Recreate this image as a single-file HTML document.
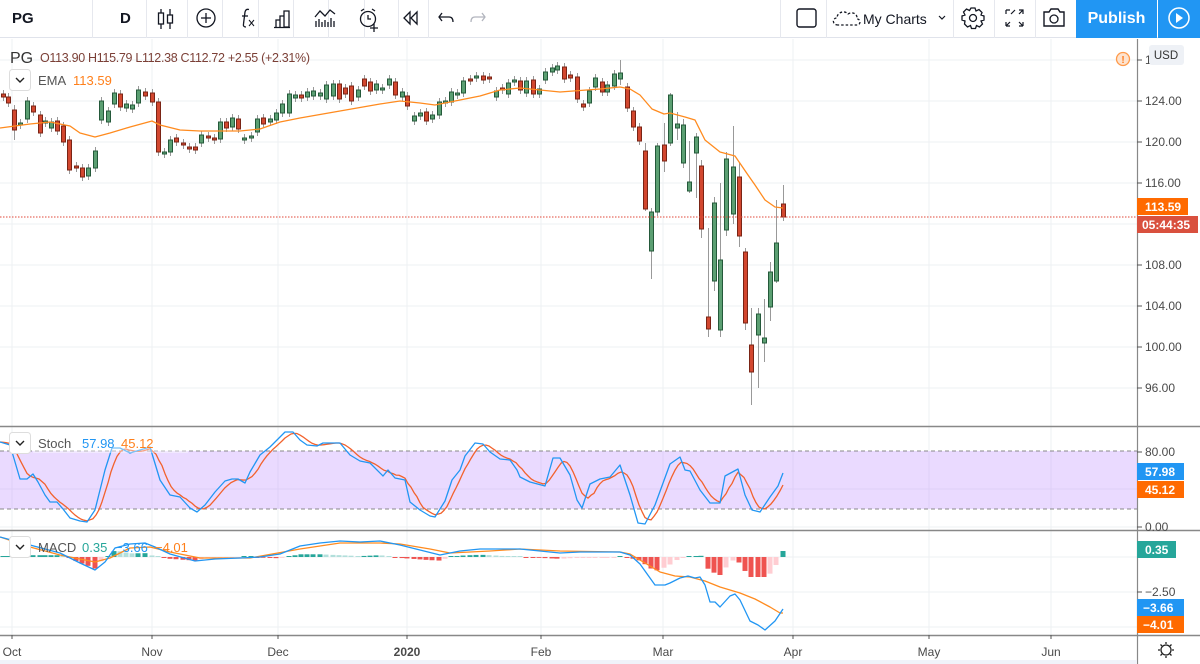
<!DOCTYPE html>
<html><head><meta charset="utf-8">
<style>
*{margin:0;padding:0;box-sizing:border-box}
body{width:1200px;height:664px;overflow:hidden;background:#fff;font-family:"Liberation Sans",sans-serif;color:#131722;position:relative}
#tb{position:absolute;left:0;top:0;width:1200px;height:38px;border-bottom:1px solid #e0e3eb;background:#fff;z-index:2}
.sep{position:absolute;top:0;width:1px;height:38px;background:#e6e8ee}
.tx{position:absolute;font-size:15px;top:10px}
#chart{position:absolute;left:0;top:0}
</style></head><body>
<div id="tb">
 <div class="tx" style="left:12px;font-weight:bold;font-size:15px">PG</div>
 <div class="sep" style="left:92px"></div>
 <div class="tx" style="left:120px;font-weight:bold">D</div>
 <div class="sep" style="left:146px"></div><div class="sep" style="left:187px"></div><div class="sep" style="left:222px"></div><div class="sep" style="left:258px"></div><div class="sep" style="left:293px"></div><div class="sep" style="left:328px"></div><div class="sep" style="left:364px"></div><div class="sep" style="left:398px"></div><div class="sep" style="left:428px"></div>
 <div class="sep" style="left:780px"></div><div class="sep" style="left:826px"></div><div class="sep" style="left:953px"></div><div class="sep" style="left:994px"></div><div class="sep" style="left:1035px"></div>
 <svg width="1200" height="38" style="position:absolute;left:0;top:0" fill="none" stroke="#131722" stroke-width="1.3">
  <g><line x1="161" y1="9" x2="161" y2="29"/><rect x="158.5" y="13" width="5" height="11" fill="#fff"/><line x1="170" y1="9" x2="170" y2="29"/><rect x="167.5" y="15" width="5" height="8" fill="#fff"/></g>
  <circle cx="206" cy="18" r="9"/><line x1="206" y1="13" x2="206" y2="23"/><line x1="201" y1="18" x2="211" y2="18"/>
  <path d="M246 27 C244 27 243 26 243.5 24 L245 12 C245.5 9.5 247 9 249 9.5"/><line x1="242" y1="16" x2="248" y2="16"/><path d="M249 20 L254 26 M254 20 L249 26" stroke-width="1"/>
  <path d="M276 27V20H280V27 M280 27V16H284V27 M284 27V11H289V27Z M274 27.5H290"/>
  <path d="M315 17 L320 11 L325 16 L330 10 L335 14"/><path d="M316 27V21 M319 27V19 M322 27V22 M325 27V20 M328 27V22 M331 27V18 M334 27V21"/>
  <circle cx="368" cy="19" r="7.5"/><path d="M368 15V19H371 M361 11L364 9 M375 11L372 9 M374 24V32 M370 28H378"/>
  <path d="M410 12L404 18L410 24Z M417 12L411 18L417 24Z"/>
  <path d="M442 13L439 17L442 21 M439 17H449C452 17 453 19 453 22" stroke="#131722"/>
  <path d="M482 13L485 17L482 21 M485 17H475C472 17 471 19 471 22" stroke="#b2b5be"/>
  <rect x="797" y="9" width="19" height="18" rx="2.5" stroke-width="1.4"/>
  <path d="M838 25 C832 25 832 18 837 18 C837 12 845 10 848 14 C852 11 858 14 857 19 C861 19 861 25 857 25 Z" stroke-dasharray="2.5 2"/>
  <path d="M939 16L942 19L945 16" stroke-width="1.2"/>
  <circle cx="973" cy="18" r="3.5"/><path d="M971 8h4l1 3 3-1.5 3 3L981 15l3 1v4l-3 1 1.5 3-3 3-3-1.5-1 3h-4l-1-3-3 1.5-3-3L965 21l-3-1v-4l3-1-1.5-3 3-3 3 1.5Z"/>
  <path d="M1006 10V14 M1006 10H1010 M1015 10L1011 14 M1019 10H1023V14 M1023 10L1019 14 M1006 26V22 M1006 26H1010 M1006 26L1010 22 M1023 26V22 M1023 26H1019 M1023 26L1019 22" stroke-width="1.2"/>
  <path d="M1044 12h5l2-3h7l2 3h4v14h-20z" stroke-width="1.4"/><circle cx="1054" cy="19" r="4"/>
 </svg>
 <div class="tx" style="left:863px;font-size:14px;top:11px">My Charts</div>
 <div style="position:absolute;left:1076px;top:0;width:81px;height:38px;background:#2196f3;color:#fff;font-size:16px;font-weight:bold;text-align:center;line-height:37px">Publish</div>
 <div style="position:absolute;left:1158px;top:0;width:42px;height:38px;background:#2196f3"></div>
 <svg style="position:absolute;left:1158px;top:0" width="42" height="38"><circle cx="21" cy="18" r="10" fill="none" stroke="#fff" stroke-width="1.5"/><path d="M18 13L25 18L18 23Z" fill="#fff"/></svg>
</div>
<svg id="chart" width="1200" height="664" style="top:0"></svg>
<script>
var S='';
function L(x1,y1,x2,y2,c,w,d){S+='<line x1="'+x1+'" y1="'+y1+'" x2="'+x2+'" y2="'+y2+'" stroke="'+c+'" stroke-width="'+(w||1)+'"'+(d?' stroke-dasharray="'+d+'"':'')+'/>';}
function R(x,y,w,h,f,s){S+='<rect x="'+x+'" y="'+y+'" width="'+w+'" height="'+h+'" fill="'+f+'"'+(s?' stroke="'+s+'" stroke-width="1"':'')+'/>';}
function T(x,y,t,c,sz,a,wt){S+='<text x="'+x+'" y="'+y+'" fill="'+c+'" font-size="'+(sz||12)+'" font-family="Liberation Sans, sans-serif"'+(a?' text-anchor="'+a+'"':'')+(wt?' font-weight="bold"':'')+'>'+t+'</text>';}
function P(pts,c,w){S+='<polyline fill="none" stroke="'+c+'" stroke-width="'+(w||1.3)+'" stroke-linejoin="round" points="'+pts.map(function(p){return p[0]+','+p[1]}).join(' ')+'"/>';}
var G='#eef0f3';
[12,152,278,407,541,663,793,929,1051].forEach(function(x){L(x,39,x,635,G);});
[60,101,142,183,224,265,306,347,388].forEach(function(y){L(0,y,1137,y,G);});
[489,527].forEach(function(y){L(0,y,1137,y,G);});
[557,592,627].forEach(function(y){L(0,y,1137,y,G);});
R(0,451,1137,58,'rgba(190,140,255,0.32)');
L(0,451,1137,451,'#888',1,'4 3');L(0,509,1137,509,'#888',1,'4 3');
L(0,426.5,1200,426.5,'#888',1.5);L(0,530.5,1200,530.5,'#888',1.5);L(0,635.5,1200,635.5,'#888',1.5);
L(1137.5,39,1137.5,664,'#888',1.2);
var C=[[3,94,97,'r'],[8,97,103,'r'],[14,110,130,'r',105,140],[20,123,125,'g'],[27,101,119,'g'],[33,106,112,'r'],[40,115,133,'r'],[45,121,123,'g'],[51,122,128,'g'],[57,121,131,'r'],[63,126,142,'r'],[69,140,170,'r'],[76,166,168,'r'],[82,168,177,'r'],[88,168,176,'g'],[95,151,168,'g'],[101,101,120,'g'],[108,111,122,'g'],[114,93,104,'g'],[120,94,107,'r'],[126,104,108,'g'],[132,105,109,'g'],[138,90,103,'g'],[145,92,96,'r'],[152,93,102,'r'],[158,102,152,'r'],[164,152,154,'g'],[170,140,152,'g'],[176,138,142,'r'],[183,143,145,'r'],[189,147,149,'r'],[195,147,150,'r'],[201,135,143,'g'],[208,136,138,'r'],[214,138,140,'r'],[220,122,139,'g'],[226,122,128,'r'],[232,118,127,'g'],[238,119,129,'r'],[244,138,140,'g'],[251,136,138,'g'],[257,119,132,'g'],[263,118,124,'r'],[270,119,122,'g'],[276,113,120,'g'],[282,104,113,'g'],[289,94,113,'g'],[295,95,98,'g'],[301,95,98,'r'],[307,92,97,'g'],[313,91,96,'g'],[320,93,96,'g'],[326,85,99,'g'],[333,84,96,'g'],[339,84,99,'r'],[345,88,94,'r'],[351,86,101,'r'],[358,90,97,'g'],[364,79,86,'r'],[370,82,91,'r'],[376,84,90,'g'],[382,88,90,'g'],[389,79,85,'g'],[395,82,95,'r'],[402,92,97,'g'],[407,96,106,'r'],[414,116,121,'g'],[420,113,116,'g'],[426,112,121,'r'],[432,115,119,'g'],[439,102,115,'g'],[445,101,103,'g'],[451,92,102,'g'],[457,93,95,'g'],[463,81,93,'g'],[470,79,81,'r'],[476,76,78,'g'],[483,76,80,'r'],[489,77,79,'r'],[496,91,97,'g'],[502,88,90,'r'],[508,83,94,'g'],[514,80,82,'g'],[520,81,90,'r'],[526,81,93,'g'],[533,80,94,'r'],[539,89,94,'g'],[545,72,80,'g'],[552,68,72,'g'],[557,66,70,'g'],[564,67,79,'r'],[570,75,78,'r'],[577,77,99,'r'],[583,104,107,'r'],[589,91,103,'g'],[595,78,87,'g'],[602,82,92,'r'],[607,85,92,'g'],[614,74,86,'g'],[620,73,79,'g',60,85],[627,87,108,'r'],[633,111,127,'r'],[639,127,141,'r'],[645,151,209,'r',143,211],[651,212,251,'g',208,279],[657,146,212,'g',143,216],[664,145,161,'r',123,172],[670,95,143,'g',93,146],[677,124,128,'g',112,140],[683,125,163,'g',119,168],[689,182,191,'g',141,193],[696,137,153,'g',133,198],[701,166,229,'r',160,238],[708,317,329,'r',228,337],[714,203,281,'g',197,291],[720,260,330,'g',183,337],[726,159,230,'g',152,236],[733,167,214,'g',126,224],[739,177,236,'r',163,247],[745,252,323,'r',248,330],[751,345,372,'r',308,405],[758,314,335,'g',308,388],[764,338,343,'g',299,362],[770,272,307,'g',262,321],[776,243,281,'g',200,283],[783,204,217,'r',185,221]];
C.forEach(function(c){var wt=c[4]||c[1]-4,wb=c[5]||c[2]+4;L(c[0]+0.5,wt,c[0]+0.5,wb,'#999');
 var g=c[3]=='g';R(c[0]-1.5,c[1],4,Math.max(1,c[2]-c[1]),g?'#5b9f72':'#d2472f',g?'#24593a':'#7a2415');});
P([[0,128],[30,124],[50,122],[70,126],[80,133],[95,137],[110,133],[130,127],[152,121],[160,125],[180,130],[200,131],[240,131],[260,129],[280,122],[300,118],[340,111],[380,104],[400,101],[420,103],[435,105],[460,100],[480,96],[500,90],[520,88],[540,90],[560,92],[600,89],[620,87],[630,89],[640,95],[652,109],[664,114],[670,113],[685,117],[695,120],[705,140],[720,152],[735,156],[748,175],[755,185],[765,200],[775,207],[783,208]],'#ff8b1f',1.3);
L(0,217,1137,217,'#e0483a',1,'1.5 1.5');
var K=[[0,442],[10,445],[20,479],[27,479],[33,474],[38,482],[45,495],[50,502],[57,502],[63,509],[70,518],[80,521],[87,522],[95,510],[105,470],[112,448],[120,448],[130,453],[140,450],[150,447],[160,480],[170,495],[180,497],[190,508],[197,512],[205,505],[215,492],[225,481],[232,479],[238,479],[245,483],[250,472],[260,455],[270,447],[277,440],[285,432],[293,432],[300,440],[307,445],[317,446],[323,443],[340,443],[350,455],[360,461],[370,463],[383,476],[388,470],[395,478],[405,480],[410,502],[420,510],[430,516],[435,517],[445,501],[452,480],[460,470],[465,456],[475,443],[483,444],[490,452],[500,459],[510,460],[517,470],[520,477],[530,482],[545,486],[553,458],[560,458],[570,475],[577,500],[582,508],[590,484],[600,479],[610,477],[620,465],[630,495],[638,523],[645,524],[655,505],[670,464],[680,457],[685,470],[690,471],[700,490],[710,503],[720,503],[725,476],[738,469],[745,495],[752,510],[760,512],[770,497],[778,486],[783,473]];
function iy(A,x){if(x<=A[0][0])return A[0][1];for(var i=1;i<A.length;i++){if(A[i][0]>=x){var a=A[i-1],b=A[i];return a[1]+(b[1]-a[1])*(x-a[0])/(b[0]-a[0]);}}return A[A.length-1][1];}
var D=[];for(var x=0;x<=783;x+=3){var v=(iy(K,x)+iy(K,x-6)+iy(K,x-12))/3;D.push([x,v]);}
D[D.length-1]=[783,485];
P(D,'#f2622d',1.3);P(K,'#2196f3',1.3);
var M=[[0,537],[30,545],[60,553],[80,563],[95,570],[105,562],[115,548],[130,544],[145,543],[155,547],[170,554],[195,561],[215,559],[240,558],[260,557],[280,554],[300,546],[320,543],[340,541],[360,542],[380,541],[400,545],[420,550],[440,555],[460,551],[480,549],[500,549],[520,549],[540,551],[560,553],[580,552],[620,552],[630,555],[640,564],[650,578],[655,585],[665,585],[670,583],[680,578],[688,576],[695,578],[700,577],[705,585],[710,602],[715,602],[720,607],[730,596],[735,594],[740,600],[750,621],[758,625],[765,630],[775,621],[783,609]];
var Sg=[[0,537],[30,547],[60,555],[95,562],[110,558],[130,548],[150,547],[170,552],[200,558],[250,558],[300,549],[340,543],[380,543],[400,544],[430,549],[450,553],[470,552],[490,551],[520,549],[560,551],[620,552],[630,554],[645,563],[660,572],[675,576],[690,577],[705,581],[720,587],[740,593],[755,599],[770,607],[780,613],[783,613]];
var prev=0;C.forEach(function(c){var x=c[0];var h=(iy(Sg,x)-iy(M,x))*0.9;if(x<100&&h<0)h*=1.6;if(h<-20)h=-20;if(x==783)h=6;var col;if(h>=0)col=(h>=prev?'#26a69a':'#b2dfdb');else col=(h<=prev?'#ef5350':'#ffcdd2');prev=h;
 if(Math.abs(h)<0.8)h=h<0?-1:1;R(x-2.5,h>0?557-h:557,5,Math.abs(h),col);});
P(Sg,'#ff8b1f',1.3);P(M,'#2196f3',1.3);
[[60,'128.00'],[101,'124.00'],[142,'120.00'],[183,'116.00'],[265,'108.00'],[306,'104.00'],[347,'100.00'],[388,'96.00']].forEach(function(a){L(1137,a[0],1142,a[0],'#555');T(1145,a[0]+4,a[1],'#4a4a4a',12);});
S+='<rect x="1149" y="45" width="35" height="20" rx="3" fill="#eef1f6"/>';T(1166,59,'USD','#333',11.5,'middle');
S+='<circle cx="1123" cy="59" r="6.5" fill="#fde3cf" stroke="#ff9a4a" stroke-width="1.3"/>';T(1123,63,'!','#ff7a1a',10,'middle',1);
R(1137,198,51,17,'#ff6a00');T(1145,211,'113.59','#fff',12,null,1);
R(1137,216,61,17,'#d9503e');T(1142,229,'05:44:35','#fff',12,null,1);
[[452,'80.00'],[527,'0.00']].forEach(function(a){L(1137,a[0],1142,a[0],'#555');T(1145,a[0]+4,a[1],'#4a4a4a',12);});
R(1137,463,47,17,'#2196f3');T(1145,476,'57.98','#fff',12,null,1);
R(1137,481,47,17,'#ff6a00');T(1145,494,'45.12','#fff',12,null,1);
L(1137,592,1142,592,'#555');T(1145,596,'−2.50','#4a4a4a',12);
R(1137,541,39,17,'#26a69a');T(1145,554,'0.35','#fff',12,null,1);
R(1137,599,47,17,'#2196f3');T(1143,612,'−3.66','#fff',12,null,1);
R(1137,616,47,17,'#ff6a00');T(1143,629,'−4.01','#fff',12,null,1);
[[12,'Oct'],[152,'Nov'],[278,'Dec'],[407,'2020'],[541,'Feb'],[663,'Mar'],[793,'Apr'],[929,'May'],[1051,'Jun']].forEach(function(a){L(a[0],635,a[0],639,'#555');T(a[0],656,a[1],'#4a4a4a',12,'middle',a[1]=='2020');});
S+='<g fill="none" stroke="#222" stroke-width="1.3"><circle cx="1166" cy="650" r="5"/><path d="M1166 642v2M1166 656v2M1158 650h2M1172 650h2M1160.5 644.5l1.5 1.5M1170 654l1.5 1.5M1160.5 655.5l1.5-1.5M1170 646l1.5-1.5"/></g>';
R(0,660,1137,4,'#f0f3fa');
T(10,63,'PG','#333',16);
S+='<text x="40" y="62" fill="#7b3f36" font-size="12.5" font-family="Liberation Sans, sans-serif" textLength="270" lengthAdjust="spacing">O113.90 H115.79 L112.38 C112.72 +2.55 (+2.31%)</text>';
S+='<rect x="9.5" y="69.5" width="21" height="21" rx="3" fill="#fff" stroke="#ddd"/><path d="M16 78l4 4 4-4" fill="none" stroke="#222" stroke-width="1.4"/>';
T(38,85,'EMA','#555',13);T(73,85,'113.59','#ff7f1a',13);
S+='<rect x="33" y="443" width="155" height="10" fill="rgba(255,255,255,0.4)"/>';
S+='<rect x="9.5" y="432.5" width="21" height="21" rx="3" fill="#fff" stroke="#ddd"/><path d="M16 441l4 4 4-4" fill="none" stroke="#222" stroke-width="1.4"/>';
T(38,448,'Stoch','#555',13);T(82,448,'57.98','#2196f3',13);T(121,448,'45.12','#ff7f1a',13);
S+='<rect x="9.5" y="536.5" width="21" height="21" rx="3" fill="#fff" stroke="#ddd"/><path d="M16 545l4 4 4-4" fill="none" stroke="#222" stroke-width="1.4"/>';
T(38,552,'MACD','#555',13);T(82,552,'0.35','#26a69a',13);T(115,552,'−3.66','#2196f3',13);T(155,552,'−4.01','#ff7f1a',13);
document.getElementById('chart').innerHTML=S;
</script>
</body></html>
